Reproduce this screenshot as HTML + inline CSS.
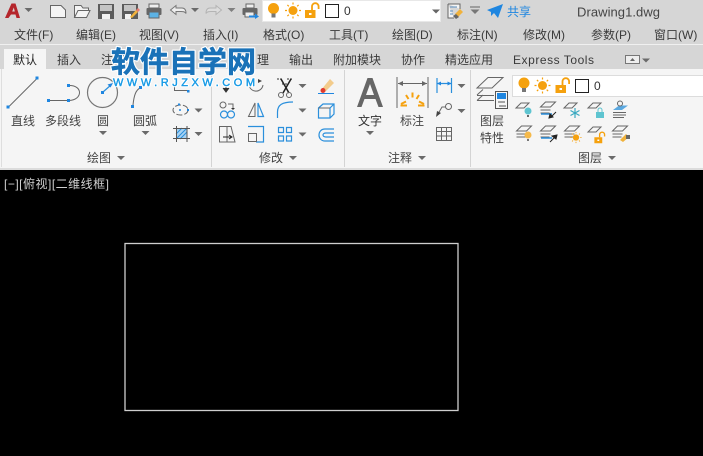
<!DOCTYPE html>
<html><head><meta charset="utf-8"><style>
html,body{margin:0;padding:0;background:#000;width:703px;height:456px;overflow:hidden}
svg{display:block}
text{font-family:"Liberation Sans","Noto Sans CJK SC",sans-serif;fill:#3a3a3a;font-size:12px}
.l{font-size:12px;fill:#444}
.g{fill:none;stroke:#777;stroke-width:1.2}
.d{fill:none;stroke:#666;stroke-width:1}
.b{fill:none;stroke:#2a8fdc;stroke-width:1.2}
.s{fill:#1f86e0}
.o{fill:#f5a10e}
</style></head><body>
<svg width="703" height="456" viewBox="0 0 703 456" xmlns="http://www.w3.org/2000/svg">
<defs>
<path id="ar" d="M-4 -2H4L0 2Z" fill="#6a6a6a"/>
<g id="bulb"><circle cx="0" cy="-1.500" r="5.500" fill="#f5a10e"/><rect x="-2" y="3.500" width="4" height="4" fill="#777"/></g>
<g id="sun"><circle r="4.500" fill="#f5a10e"/><path d="M0-8V-6M0 6V8M-8 0H-6M6 0H8M-5.600-5.600L-4.200-4.200M4.200 4.200L5.600 5.600M-5.600 5.600L-4.200 4.200M4.200-4.200L5.600-5.600" stroke="#f5a10e" stroke-width="1.200"/></g>
<g id="lock"><rect x="-5.500" y="-1" width="10.500" height="8" fill="#f5a10e"/><rect x="-1.500" y="2" width="2.500" height="2" fill="#fff"/><path d="M1.500-1V-4.500A3.300 3.300 0 0 1 8.100-4.500V-2" fill="none" stroke="#f5a10e" stroke-width="1.800"/></g>
<path id="pl" d="M-2 4L3-1H11L6 4Z" fill="none" stroke="#666" stroke-width="1"/>
<path id="st" d="M0 5L5 0H15L10 5ZM0 8H10M0 11H9" fill="none" stroke="#666" stroke-width="1"/>
</defs>

<rect width="703" height="170" fill="#d6d6d6"/>
<rect y="44" width="703" height="1" fill="#f0f0f0"/>
<rect y="69" width="703" height="99" fill="#f5f5f5"/>
<rect y="168" width="703" height="2" fill="#dcdcdc"/>
<rect x="4" y="49" width="42" height="20" fill="#f5f5f5"/>
<rect x="1" y="69" width="1" height="98" fill="#dedede"/>
<rect x="211" y="70" width="1" height="97" fill="#d4d4d4"/>
<rect x="344" y="70" width="1" height="97" fill="#d4d4d4"/>
<rect x="470" y="70" width="1" height="97" fill="#d4d4d4"/>

<path d="M5 18L11.500 3.500H15.500L20 18H16.500L15.500 14.500H11L8.500 18ZM12.200 11.500H14.800L13.800 7.500Z" fill="#b5262c"/>
<use href="#ar" x="28.500" y="10"/>

<path d="M50.500 5.500H61L65.500 10V17.500H50.500Z" fill="#f4f4f4" stroke="#666" stroke-width="1"/>
<path d="M74.500 17.500V5.500H81L83 8H88.500V10.500M74.500 17.500L78 10.500H90L86.500 17.500Z" fill="#f4f4f4" stroke="#666" stroke-width="1"/>
<path d="M98 4H114V19H98Z" fill="#5c5c5c"/><rect x="100" y="5" width="12" height="6" fill="#c4c4c4"/><rect x="102" y="14" width="8" height="5" fill="#f2f2f2"/>
<path d="M122 4H138V19H122Z" fill="#5c5c5c"/><rect x="124" y="5" width="12" height="6" fill="#c4c4c4"/><rect x="125" y="14" width="6" height="5" fill="#f2f2f2"/>
<path d="M130 17L136 10L138 12L132 18Z" fill="#f0b23c"/><path d="M136 10L138 8L140 10L138 12Z" fill="#e87a70"/>
<rect x="149" y="4" width="10" height="4" fill="#eee" stroke="#666"/>
<rect x="146.500" y="8" width="15" height="7" rx="1" fill="#666"/>
<rect x="149" y="12" width="10" height="6" fill="#5cb2e4" stroke="#666"/>
<path d="M170.500 10L176 5.500V8H182C185 8 186 10 186 13.500C185 11.500 183 11.500 181 11.500H176V14.500Z" fill="#eee" stroke="#777"/>
<use href="#ar" x="195" y="10"/>
<path d="M221.500 10L216 5.500V8H210C207 8 206 10 206 13.500C207 11.500 209 11.500 211 11.500H216V14.500Z" fill="#ddd" stroke="#b4b4b4"/>
<use href="#ar" x="231.500" y="10" opacity=".8"/>
<rect x="246" y="4" width="8" height="4" fill="#eee" stroke="#666"/>
<rect x="242.500" y="8" width="15" height="7" rx="1" fill="#666"/>
<rect x="245" y="12" width="9" height="5" fill="#eee" stroke="#666"/>
<path d="M249 15.500H255V13.500L259 16.500L255 19V17.500H249Z" fill="#1f86e0"/>

<rect x="262.500" y="0.500" width="178" height="21" fill="#fff" stroke="#e8e8e8"/>
<use href="#bulb" x="273.500" y="10"/>
<use href="#sun" x="293" y="10.500"/>
<use href="#lock" x="310.500" y="11"/>
<rect x="325.500" y="4.500" width="13" height="13" fill="#fff" stroke="#222"/>
<text x="344" y="15" style="fill:#333">0</text>
<path d="M432 9.500H440L436 13.500Z" fill="#666"/>

<path d="M448 4H460V9M448 4V18H454" fill="#f4f4f4" stroke="#666"/>
<path d="M450 7H457M450 11H453M450 14H453" stroke="#5a8fc0"/>
<path d="M455 14L460 9L463 12L458 17Z" fill="#f0b23c"/><path d="M453 16L456 19L459 17L456 14Z" fill="#666"/>
<path d="M470 7H480" stroke="#777" stroke-width="1.200"/><path d="M470.500 9.500H479.500L475 14Z" fill="#777"/>
<path d="M487 10L503 4L498 18L494 13L491 16V12Z" fill="#1f86e0"/>
<text x="507" y="16" style="fill:#1f86e0">共享</text>
<text x="577" y="16.500" style="font-size:13px;fill:#444" textLength="83">Drawing1.dwg</text>

<text x="14" y="39">文件(F)</text><text x="76" y="39">编辑(E)</text><text x="139" y="39">视图(V)</text><text x="203" y="39">插入(I)</text><text x="263" y="39">格式(O)</text><text x="329" y="39">工具(T)</text><text x="392" y="39">绘图(D)</text><text x="457" y="39">标注(N)</text><text x="523" y="39">修改(M)</text><text x="591" y="39">参数(P)</text><text x="654" y="39">窗口(W)</text>

<text x="13" y="64" style="fill:#222">默认</text><text x="57" y="64">插入</text><text x="101" y="64">注释</text><text x="257" y="64">理</text><text x="289" y="64">输出</text><text x="333" y="64">附加模块</text><text x="401" y="64">协作</text><text x="445" y="64">精选应用</text><text x="513" y="64" textLength="81">Express Tools</text>
<rect x="625.500" y="55.500" width="14" height="8" fill="#eee" stroke="#777"/><path d="M630 61H635L632.500 58Z" fill="#666"/>
<use href="#ar" x="646" y="60.500"/>

<!-- draw -->
<path class="d" d="M9 106.500L37 78.500"/><rect class="s" x="6.500" y="105.500" width="3" height="3"/><rect class="s" x="35.500" y="76.500" width="3" height="3"/>
<path class="d" d="M49 100.500H68M69 85.500C83 85 83 100 69 100.500"/><rect class="s" x="47" y="99" width="3" height="3"/><rect class="s" x="67" y="99" width="3" height="3"/><rect class="s" x="67" y="84" width="3" height="3"/>
<circle class="g" cx="102.500" cy="92.500" r="15"/><path class="b" d="M103 92L111 85"/><path d="M113 83L107.500 84.500L110.500 87.500Z" class="s"/><rect class="s" x="101" y="91" width="3" height="3"/>
<path class="d" d="M133 105C134 95 136 90 140 88"/><rect class="s" x="131" y="105" width="3" height="3"/><rect class="s" x="139" y="86" width="3" height="3"/>
<text class="l" x="11" y="125">直线</text><text class="l" x="45" y="125">多段线</text><text class="l" x="97" y="125">圆</text><text class="l" x="133" y="125">圆弧</text>
<use href="#ar" x="103" y="133"/><use href="#ar" x="145.500" y="133"/>
<path class="d" d="M174.500 84V90.500H187"/><rect class="s" x="187" y="90" width="2.500" height="2.500"/>
<ellipse cx="180.500" cy="110" rx="7.500" ry="5" class="d" stroke-dasharray="6 2"/><circle cx="180" cy="110" r="1" class="s"/><rect class="s" x="178" y="103.500" width="2" height="2"/><rect class="s" x="187" y="109" width="2" height="2"/>
<use href="#ar" x="198.500" y="110.500"/>
<rect x="176" y="128" width="11" height="11" fill="#a9d3f2"/><path d="M176 139L187 128M180 139L187 132M176 134L182 128" stroke="#2a8fdc"/>
<path d="M173 128.500H190M173 138.500H190M176.500 126V142M187 126V142" stroke="#555" fill="none"/>
<use href="#ar" x="198.500" y="134"/>
<text class="l" x="87" y="162">绘图</text><use href="#ar" x="121" y="158"/>

<!-- modify -->
<path d="M226 84V90M223 88L226 92L229 88" stroke="#333" fill="#333"/>
<path class="d" d="M249 83A7 7 0 1 0 263 85"/><path d="M258 79L262 81L258 83Z" fill="#444"/>
<circle class="d" cx="223" cy="105" r="3"/><path class="d" d="M228 104H233V108"/><path d="M231 108H235L233 110Z" fill="#333"/>
<circle class="b" cx="224" cy="114.500" r="3.500"/><circle class="b" cx="231" cy="114.500" r="3.500"/>
<path class="d" d="M248.500 116.500L255 103V116.500Z"/><path class="b" d="M258 103L263.500 116.500H258Z"/>
<path class="b" d="M277.500 118V112C277.500 105 282 102 293 102"/><use href="#ar" x="302.500" y="110.500"/>
<path class="b" d="M318.500 108L323 104H334V114L330 118H318.500ZM330 108V118M330 108L334 104"/><path class="d" d="M318.500 108H330"/>
<path class="d" d="M219.500 126.500H227V142H219.500ZM227 126.500H231L235 142H227"/><path d="M223 137H231M229 135L232 137L229 139" stroke="#222" fill="none"/>
<path class="b" d="M248 126.500H263.500V142H256"/><rect x="248.500" y="133.500" width="8" height="8" class="d"/>
<path class="b" d="M278.500 127.500h5v5h-5zM286.500 127.500h5v5h-5zM278.500 136h5v5h-5zM286.500 136h5v5h-5z"/><use href="#ar" x="302.500" y="134.500"/>
<path class="b" d="M334 129H325C317 129 317 141 325 141H334M334 133H326C322 133 322 137 326 137H334"/>
<path d="M277 79H282M287 79H293M282 84H288" stroke="#333" stroke-dasharray="2 1"/><path d="M281 79L289 93M291 79L283 93" stroke="#222" stroke-width="1.500"/><circle class="d" cx="281" cy="95" r="2.500"/><circle class="d" cx="289" cy="95" r="2.500"/>
<use href="#ar" x="302.500" y="86"/>
<path d="M321 90L330 79L334 83L325 92Z" fill="#f3cc8c"/><circle cx="323" cy="90.500" r="2.500" fill="#e23b2e"/><path d="M318 93.500H334" stroke="#1f86e0"/>
<text class="l" x="259" y="162">修改</text><use href="#ar" x="293" y="158"/>

<!-- annotate -->
<path d="M357 107L367.500 78H372.500L383 107H378.500L375.500 99H364.500L361.500 107ZM366 95H374L370 84Z" fill="#666"/>
<text class="l" x="358" y="125" style="fill:#333">文字</text><use href="#ar" x="370" y="133"/>
<path class="d" d="M397 77V108M428 77V108M398 83.500H427"/><path d="M398 83.500L403 81V86ZM427 83.500L422 81V86Z" fill="#666"/>
<path d="M412.500 92.500V97.500M406 95L408.500 99M419 95L416.500 99M401 104L406 101.500M424 104L419 101.500M400.500 105.500H407M418 105.500H424.500" stroke="#f5a10e" stroke-width="2"/>
<text class="l" x="400" y="125">标注</text>
<path class="b" d="M437 78V93M451.500 78V93M437 83.500H451.500"/><path d="M437 83.500L441 81.500V85.500ZM451.500 83.500L447.500 81.500V85.500Z" class="s"/>
<use href="#ar" x="461.500" y="86"/>
<circle class="d" cx="448.500" cy="106.500" r="3"/><path class="d" d="M446 107H442L438 114"/><path d="M436 117L437 111L441 113Z" fill="#444"/>
<use href="#ar" x="461.500" y="111"/>
<path class="d" d="M436.500 127.500H451.500V140.500H436.500ZM436.500 131.500H451.500M436.500 136H451.500M441.500 127.500V140.500M446.500 127.500V140.500"/>
<text class="l" x="388" y="162">注释</text><use href="#ar" x="422" y="158"/>

<!-- layers -->
<path class="d" d="M477 88L488 77.500H503L492 88ZM477 95L483 89.500M477 95.500H494M477 100.500L483 95M477 100.500H494"/>
<rect x="495.500" y="91.500" width="12" height="17" fill="#f7f7f7" stroke="#555"/><rect x="497" y="93" width="9" height="6" fill="#1f86e0"/><path d="M498 102H505M499 106H506" stroke="#555"/>
<text class="l" x="480" y="125">图层</text><text class="l" x="480" y="142">特性</text>
<rect x="512.500" y="75.500" width="191" height="21" fill="#fff" stroke="#dcdcdc"/>
<use href="#bulb" x="524" y="84.500"/><use href="#sun" x="542.500" y="85.500"/><use href="#lock" x="561" y="86"/>
<rect x="575.500" y="79.500" width="13" height="13" fill="#fff" stroke="#222"/>
<text x="594" y="90" style="fill:#333">0</text>

<use href="#pl" x="518" y="104"/><circle cx="528" cy="111" r="3.500" fill="#5ec4d0"/><rect x="527" y="115" width="2" height="2" fill="#666"/>
<use href="#st" x="540.500" y="102"/><path d="M541 114H552" stroke="#2a8fdc" stroke-width="1.500"/><path d="M556 112L551 117M549 118L553 117L550 114Z" stroke="#222" fill="#222"/>
<use href="#pl" x="566" y="104"/><path d="M575 108V118M570.500 110.500L579.500 115.500M570.500 115.500L579.500 110.500" stroke="#39a9c0" stroke-width="1.200"/>
<use href="#pl" x="590" y="104"/><rect x="596" y="112" width="8" height="6" fill="#5ec4d0"/><path d="M598 112V110A2 2 0 0 1 602 110V112" fill="none" stroke="#5ec4d0"/>
<path d="M613 110L619 105.500H628L622 110Z" fill="#5aa8e0"/><path class="d" d="M613 112.500H626M613 115H626M613 117.500H624"/><circle class="d" cx="620" cy="103.500" r="2.500"/>

<use href="#st" x="516.500" y="126"/><circle cx="528" cy="135" r="3.500" fill="#f5b94a"/><rect x="527" y="139" width="2" height="2" fill="#777"/>
<use href="#st" x="540.500" y="126"/><path d="M541 138H552" stroke="#2a8fdc" stroke-width="1.500"/><path d="M550 142L555 137M557 135L552 136L556 139Z" stroke="#222" fill="#222"/>
<use href="#st" x="564.500" y="126"/><use href="#sun" transform="translate(576 137.500) scale(.7)"/>
<use href="#pl" x="590" y="128"/><use href="#lock" transform="translate(598.500 138) scale(.75)"/>
<use href="#st" x="612.500" y="126"/><path d="M620 140L626 134L629 137L623 142Z" fill="#f0b23c"/>
<rect x="626" y="135" width="4" height="4" fill="#666"/>
<text class="l" x="578" y="162">图层</text><use href="#ar" x="612" y="158"/>

<!-- viewport -->
<text x="4" y="188" style="fill:#d0d0d0" textLength="105">[−][俯视][二维线框]</text>
<rect x="125" y="243.500" width="333" height="167" fill="none" stroke="#cfcfcf" stroke-width="1.300"/>

<!-- watermark -->
<text x="111" y="72" style="font-size:29px;font-weight:bold;fill:#1a72b8;stroke:#fff;stroke-width:3;paint-order:stroke;stroke-linejoin:round" textLength="145">软件自学网</text>
<text x="111" y="72" style="font-size:29px;font-weight:bold;fill:#1a72b8;stroke:#1a72b8;stroke-width:.6" textLength="145">软件自学网</text>
<text x="113" y="86" style="font-size:11px;fill:#1b9ce6;stroke:#fff;stroke-width:2.500;paint-order:stroke;stroke-linejoin:round" textLength="142" lengthAdjust="spacing">WWW.RJZXW.COM</text>
<text x="113" y="86" style="font-size:11px;fill:#1b9ce6;stroke:#1b9ce6;stroke-width:.4" textLength="142" lengthAdjust="spacing">WWW.RJZXW.COM</text>
</svg>
</body></html>
